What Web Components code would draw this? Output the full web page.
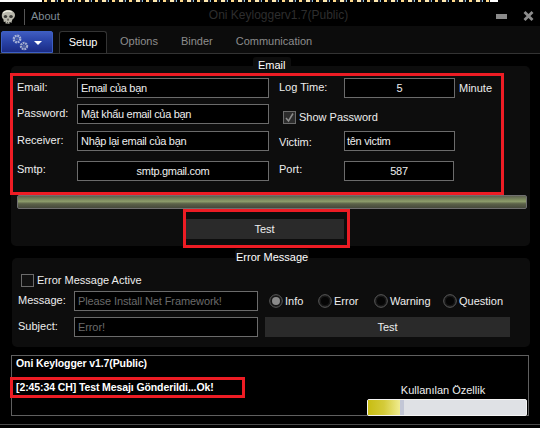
<!DOCTYPE html>
<html>
<head>
    <meta charset="utf-8">
    <title>Oni Keylogger</title>
    <style>
        html, body { margin: 0; background: #000; overflow: hidden; }
        body { font: 11px "Liberation Sans", Arial, sans-serif; color: #eee; }
    </style>
</head>
<body>
<oni-window>
    <oni-titlebar slot="head">Oni Keyloggerv1.7(Public)</oni-titlebar>
    <oni-tabs slot="head"></oni-tabs>

    <oni-group legend="Email" style="margin:12px 10px 0 11px;height:180px" legend-x="242" legend-pad="5">
        <oni-email-form></oni-email-form>
        <oni-meter style="margin:14px 3px 0 6px"></oni-meter>
        <oni-button style="width:159px;margin:10px 0 0 174px">Test</oni-button>
    </oni-group>

    <oni-group legend="Error Message" style="margin:12px 10px 0 12px;height:89px" legend-x="223" legend-pad="1">
        <oni-error-form></oni-error-form>
    </oni-group>

    <oni-log style="margin:8px 11px 0 11px"></oni-log>
    <oni-mark style="left:10px;top:73px;width:488px;height:116px"></oni-mark>
    <oni-mark style="left:183px;top:209px;width:161px;height:33px"></oni-mark>
    <oni-mark style="left:10px;top:377px;width:229px;height:15px"></oni-mark>
</oni-window>

<script>
    // small helper so each class only has to list its css and markup
    function shadow(el, html) {
        el.attachShadow({ mode: 'open' }).innerHTML = html;
    }

    class OniWindow extends HTMLElement {
        constructor() {
            super();
            shadow(this, `<style>
                :host { display: flex; flex-direction: column; position: relative; width: 540px; height: 428px; background: #000; overflow: hidden; }
                .specks { height: 2px; flex: none; background:
                    linear-gradient(90deg, #fff 0 42px, transparent 42px 490px, #fff 490px 498px, #000 498px),
                    repeating-linear-gradient(90deg, #ffe9b0 0 4px, #223 4px 6px, #8fc4e0 6px 7px, #000 7px 10px, #ffd98a 10px 13px, #111 13px 17px); }
                .foot { position: absolute; left: 0; right: 0; top: 424px; height: 1px; background: #4a4a4a; }
            </style>
            <div class="specks"></div>
            <slot name="head"></slot>
            <slot></slot>
            <div class="foot"></div>`);
        }
    }

    class OniTitlebar extends HTMLElement {
        constructor() {
            super();
            shadow(this, `<style>
                :host { display: flex; align-items: center; height: 24px; position: relative; flex: none; }
                .skull { margin: 0 0 0 1px; flex: none; }
                .sep { width: 1px; height: 16px; background: #555; margin: 5px 0 0 8px; }
                .about { margin: 4px 0 0 6px; color: #7f8c95; }
                .name { position: absolute; left: 0; width: 557px; top: 5px; text-align: center; color: #2e2e2e; font-size: 12px; line-height: 16px; }
                .btns { margin: 4px 6px 0 auto; display: flex; gap: 16px; align-items: center; }
            </style>
            <svg class="skull" width="15" height="16" viewBox="0 0 15 16" style="margin-top:5px">
                <path d="M7 1C3 1 .6 3.6.8 7c.1 1.700.8 2.700 1.700 3.400l.2 2.300 2 .4.3 1.400 3.500.3.400-1.300 2-.5.3-2.200C12.800 9.600 14 8.200 14 6.300 14 3 11 1 7 1z" fill="#b9b8ac"/>
                <path d="M2.200 4C4 2 8 1.500 11 3" stroke="#efeee2" stroke-width="1.300" fill="none"/>
                <ellipse cx="4.500" cy="7.500" rx="1.700" ry="1.500" fill="#3a3a36"/>
                <ellipse cx="10" cy="7.500" rx="1.800" ry="1.600" fill="#3a3a36"/>
                <path d="M6.700 9.500l-.7 2h2l-.6-2z" fill="#55534c"/>
                <path d="M4.500 12.500v2M6.500 13v1.500M8.500 13v1.500M10.500 12.500v1.500" stroke="#5a5a55"/>
            </svg>
            <span class="sep"></span>
            <span class="about">About</span>
            <span class="name"><slot></slot></span>
            <span class="btns">
                <svg width="11" height="5"><rect width="11" height="5" fill="#8a8a8a"/></svg>
                <svg width="11" height="10" viewBox="0 0 11 10"><path d="M1.500 1l8 8M9.500 1l-8 8" stroke="#8c8c8c" stroke-width="2.800"/></svg>
            </span>`);
        }
    }

    class OniTabs extends HTMLElement {
        constructor() {
            super();
            shadow(this, `<style>
                :host { display: flex; align-items: flex-end; height: 27px; flex: none; background: #0c0c0c; border-bottom: 1px solid #333; padding-left: 1px; }
                .orb { width: 52px; height: 22px; box-sizing: border-box; border: 1px solid #3c5fc4; border-radius: 2px 2px 0 0; background: linear-gradient(#3f5cc0, #2a44a8 45%, #1a2b85); display: flex; align-items: center; justify-content: center; gap: 5px; }
                .tri { width: 0; height: 0; border: 4px solid transparent; border-top: 4px solid #fff; border-bottom: 0; margin-top: 2px; }
                .tab { height: 22px; line-height: 21px; color: #8d8d8d; box-sizing: border-box; flex: none; }
                .on { width: 48px; margin-left: 6px; text-align: center; color: #fff; background: #000; border: 1px solid #343434; border-bottom: 0; border-radius: 3px 3px 0 0; }
            </style>
            <div class="orb">
                <svg width="17" height="17" viewBox="0 0 17 17">
                    <circle cx="5" cy="5" r="3.200" fill="none" stroke="#a9b4d8" stroke-width="2.400" stroke-dasharray="1.800 .7"/>
                    <circle cx="5" cy="5" r="1.300" fill="#54689f"/>
                    <circle cx="12" cy="12" r="3" fill="none" stroke="#a3aecf" stroke-width="2.400" stroke-dasharray="1.800 .7"/>
                    <circle cx="12" cy="12" r="1.200" fill="#54689f"/>
                </svg>
                <span class="tri"></span>
            </div>
            <div class="tab on">Setup</div>
            <div class="tab" style="margin-left:13px">Options</div>
            <div class="tab" style="margin-left:23px">Binder</div>
            <div class="tab" style="margin-left:23px">Communication</div>`);
        }
    }

    class OniGroup extends HTMLElement {
        constructor() {
            super();
            shadow(this, `<style>
                :host { display: block; position: relative; flex: none; box-sizing: border-box; padding-top: 12px; background: #0d0d0d; border-radius: 5px; }
                .legend { position: absolute; top: -9px; line-height: 16px; background: #0d0d0d; color: #fff; border-radius: 3px 3px 0 0; }
            </style>
            <span class="legend"></span>
            <slot></slot>`);
            const legend = this.shadowRoot.querySelector('.legend');
            legend.textContent = this.getAttribute('legend');
            legend.style.left = this.getAttribute('legend-x') + 'px';
            legend.style.padding = '0 ' + this.getAttribute('legend-pad') + 'px';
        }
    }

    class OniField extends HTMLElement {
        constructor() {
            super();
            shadow(this, `<style>
                :host { display: block; box-sizing: border-box; height: 20px; border: 1px solid #6b6b6b; background: #000; color: #eee; padding: 0 3px; line-height: 18px; white-space: nowrap; overflow: hidden; letter-spacing: -.3px; }
                :host([center]) { text-align: center; }
                :host([dim]) { color: #6a6a6a; letter-spacing: -.1px; }
            </style><slot></slot>`);
        }
    }

    class OniCheck extends HTMLElement {
        constructor() {
            super();
            shadow(this, `<style>
                :host { display: flex; align-items: center; gap: 3px; color: #eee; }
                .box { width: 13px; height: 13px; box-sizing: border-box; border: 1px solid #6b6b6b; background: #111; display: block; }
            </style>
            <svg class="box" viewBox="0 0 11 11"></svg>
            <slot></slot>`);
            if (this.hasAttribute('checked')) {
                this.shadowRoot.querySelector('svg').innerHTML = '<rect width="11" height="11" fill="#2c2c2c"/><path d="M2 6l2.500 3L9 1.500" fill="none" stroke="#8c8c8c" stroke-width="1.500"/>';
            }
        }
    }

    class OniRadio extends HTMLElement {
        constructor() {
            super();
            shadow(this, `<style>
                :host { display: flex; align-items: center; gap: 2px; color: #eee; flex: none; }
                svg { flex: none; }
            </style>
            <svg width="14" height="14" viewBox="0 0 14 14">
                <circle cx="7" cy="7" r="6.300" fill="#161616" stroke="#5c5c5c"/>
                <circle class="dot" cx="7" cy="7" r="4" fill="#050505"/>
            </svg>
            <slot></slot>`);
            if (this.hasAttribute('checked')) {
                this.shadowRoot.querySelector('.dot').setAttribute('fill', '#8a8a8a');
            }
        }
    }

    class OniMeter extends HTMLElement {
        constructor() {
            super();
            shadow(this, `<style>
                :host { display: block; height: 14px; box-sizing: border-box; border: 1px solid #6f6f6f; border-radius: 2px; background: linear-gradient(#5e6250, #7c8a5e 30%, #8d9c6b 45%, #5c6249 65%, #45483b); }
            </style>`);
        }
    }

    class OniButton extends HTMLElement {
        constructor() {
            super();
            shadow(this, `<style>
                :host { display: block; height: 20px; line-height: 20px; text-align: center; background: #2a2a2a; color: #eee; }
            </style><slot></slot>`);
        }
    }

    class OniEmailForm extends HTMLElement {
        constructor() {
            super();
            shadow(this, `<style>
                :host { display: grid; grid-template-columns: 60px 192px 75px 111px auto; grid-template-rows: 26px 27px 30px 20px; padding-left: 6px; align-items: start; color: #eee; line-height: 20px; }
                .g { margin-left: 10px; }
                .up1 { margin-top: -1px; }
                .up2 { margin-top: -2px; }
            </style>
            <span class="up1">Email:</span><oni-field>Email của bạn</oni-field>
            <span class="g up1">Log Time:</span><oni-field center>5</oni-field><span style="margin-left:4px">Minute</span>

            <span class="up1">Password:</span><oni-field>Mật khẩu email của bạn</oni-field>
            <oni-check checked style="grid-column:3 / span 3;margin:3px 0 0 14px">Show Password</oni-check>

            <span class="up1">Receiver:</span><oni-field>Nhập lại email của bạn</oni-field>
            <span class="g" style="margin-top:1px">Victim:</span><oni-field style="padding-left:2px">tên victim</oni-field><span></span>

            <span class="up2">Smtp:</span><oni-field center>smtp.gmail.com</oni-field>
            <span class="g up2">Port:</span><oni-field center style="margin-right:1px">587</oni-field>`);
        }
    }

    class OniErrorForm extends HTMLElement {
        constructor() {
            super();
            shadow(this, `<style>
                :host { display: grid; grid-template-columns: 56px 184px 1fr; grid-template-rows: 20px 26px 20px; padding: 1px 20px 0 6px; align-items: start; color: #eee; line-height: 20px; }
                .top { grid-column: 1 / -1; margin-left: 3px; }
                .radios { display: flex; margin-left: 11px; }
                oni-button { margin-left: 7px; }
                .up1 { margin-top: -1px; }
            </style>
            <oni-check class="top" style="margin-top:-1px">Error Message Active</oni-check>
            <span class="up1">Message:</span><oni-field dim>Please Install Net Framework!</oni-field>
            <div class="radios">
                <oni-radio checked style="width:49px">Info</oni-radio>
                <oni-radio style="width:56px">Error</oni-radio>
                <oni-radio style="width:69px">Warning</oni-radio>
                <oni-radio>Question</oni-radio>
            </div>
            <span class="up1">Subject:</span><oni-field dim>Error!</oni-field>
            <oni-button>Test</oni-button>`);
        }
    }

    class OniLog extends HTMLElement {
        constructor() {
            super();
            shadow(this, `<style>
                :host { display: block; position: relative; height: 61px; box-sizing: border-box; border: 1px solid #5f5f5f; padding: 0 0 0 4px; font: bold 10.5px/14px "Liberation Sans", Arial, sans-serif; letter-spacing: -.1px; color: #fff; }
                .line { display: block; height: 14px; margin-bottom: 10px; white-space: nowrap; }
                .usage { position: absolute; left: 351px; top: 26px; width: 160px; font: 11px/16px "Liberation Sans", Arial, sans-serif; letter-spacing: 0; text-align: center; color: #eee; }
                .bar { position: absolute; left: 355px; top: 43px; width: 160px; height: 17px; box-sizing: border-box; border: 1px solid #f4f4f4; border-radius: 2px; background: #dfe1e5; }
                .fill { height: 100%; width: 32px; background: linear-gradient(90deg, #c8bd12, #d4cb3a 50%, #f0ec90); border-right: 4px solid #c3c7d6; }
            </style>
            <span class="line">Oni Keylogger v1.7(Public)</span>
            <span class="line">[2:45:34 CH] Test Mesajı Gönderildi...Ok!</span>
            <span class="usage">Kullanılan Özellik</span>
            <div class="bar"><div class="fill"></div></div>`);
        }
    }

    // red highlight frames drawn on top of the screenshot
    class OniMark extends HTMLElement {
        constructor() {
            super();
            shadow(this, `<style>
                :host { display: block; position: absolute; border: 3px solid #ed1c24; }
            </style>`);
        }
    }

    customElements.define('oni-window', OniWindow);
    customElements.define('oni-titlebar', OniTitlebar);
    customElements.define('oni-tabs', OniTabs);
    customElements.define('oni-group', OniGroup);
    customElements.define('oni-field', OniField);
    customElements.define('oni-check', OniCheck);
    customElements.define('oni-radio', OniRadio);
    customElements.define('oni-meter', OniMeter);
    customElements.define('oni-button', OniButton);
    customElements.define('oni-email-form', OniEmailForm);
    customElements.define('oni-error-form', OniErrorForm);
    customElements.define('oni-log', OniLog);
    customElements.define('oni-mark', OniMark);
</script>
</body>
</html>
